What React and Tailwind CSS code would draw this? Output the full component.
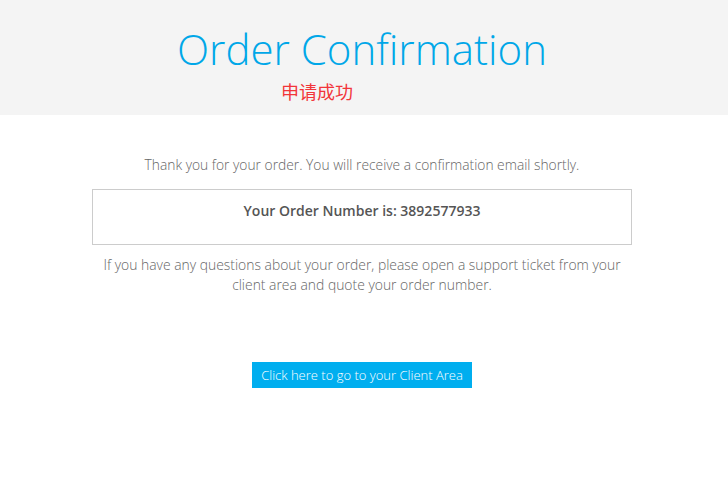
export default function App() {
  return (
    <div className="min-h-[495px] bg-white" style={{ fontFamily: '"Open Sans", "Noto Sans CJK SC", sans-serif' }}>
      <div className="h-[115px] bg-[#f4f4f4] flex flex-col items-center pr-[4px]">
        <h1 className="mt-[21px] text-[42px] leading-[56px] font-light text-[#00a7e8]">Order Confirmation</h1>
        <div className="w-full pl-[281px] mt-[2px] text-[18px] leading-[24px] text-[#f2353a]" style={{ fontFamily: '"Noto Sans CJK SC", sans-serif' }}>申请成功</div>
      </div>
      <div className="pr-[4px]">
        <div className="w-[540px] mx-auto flex flex-col items-center">
          <p className="mt-[40px] text-[13.8px] leading-[20px] font-light text-[#666]">Thank you for your order. You will receive a confirmation email shortly.</p>
          <div className="mt-[14px] w-[540px] h-[56px] border border-[#cccccc] flex justify-center pt-[11px]">
            <span className="text-[14px] leading-[20px] font-semibold text-[#555]">Your Order Number is: 3892577933</span>
          </div>
          <p className="mt-[10px] text-[13.9px] leading-[20px] font-light text-[#666] text-center">If you have any questions about your order, please open a support ticket from your client area and quote your order number.</p>
          <button className="mt-[67px] w-[220px] h-[26px] bg-[#00aeef] text-white text-[13px] font-light leading-[26px]">Click here to go to your Client Area</button>
        </div>
      </div>
    </div>
  );
}
